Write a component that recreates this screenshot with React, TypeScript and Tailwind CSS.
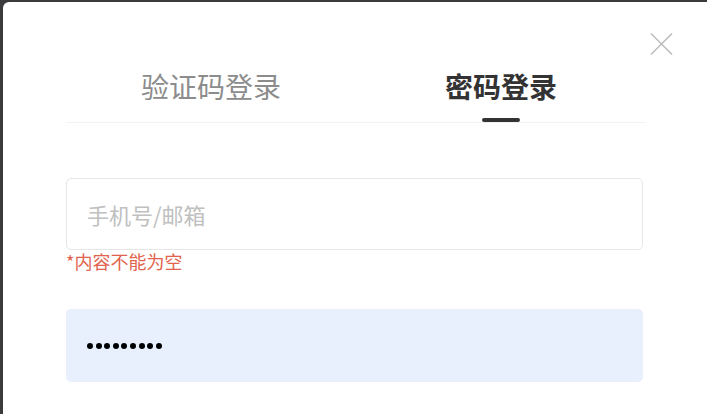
import React from "react";

export default function App() {
  const font = { fontFamily: '"Noto Sans CJK SC", "Noto Sans", sans-serif' };
  return (
    <div className="w-[707px] h-[414px] overflow-hidden bg-[#3b3b3d] pl-[3px] pt-[2px]" style={font}>
      <div className="relative h-[412px] w-[704px] rounded-tl-[6px] bg-white">
        <button className="absolute right-[34px] top-[30px] flex h-[23px] w-[23px] items-center justify-center">
          <svg width="24" height="24" viewBox="0 0 24 24" fill="none">
            <path d="M1 1L23 23M23 1L1 23" stroke="#bdbdbd" strokeWidth="1.6" />
          </svg>
        </button>
        <div className="ml-[63px] mr-[61px] pt-[69px]">
          <div className="flex border-b border-[#f2f2f2]">
            <div className="flex flex-1 flex-col items-center">
              <span className="text-[28px] leading-[30px] text-[#8c8c8c]">验证码登录</span>
              <div className="mt-[17px] h-[4px] w-[38px]" />
            </div>
            <div className="flex flex-1 flex-col items-center">
              <span className="text-[28px] leading-[30px] font-bold text-[#333333]">密码登录</span>
              <div className="mt-[17px] h-[4px] w-[38px] rounded-full bg-[#333333]" />
            </div>
          </div>
          <div className="mt-[55px] w-[577px]">
            <div className="flex h-[72px] items-center rounded-[5px] border border-[#e6e6e6] px-[20px]">
              <span className="text-[22px] text-[#c0c0c0]">手机号/邮箱</span>
            </div>
            <div className="mt-[2px] text-[18px] leading-[19px] text-[#e2634d]">*内容不能为空</div>
            <div className="mt-[38px] flex h-[73px] items-center rounded-[5px] bg-[#e8f0fe] px-[21px]">
              <div className="flex gap-[2.6px]">
                {Array.from({ length: 9 }).map((_, i) => (
                  <span key={i} className="block h-[6px] w-[6px] rounded-full bg-black" />
                ))}
              </div>
            </div>
          </div>
        </div>
      </div>
    </div>
  );
}
